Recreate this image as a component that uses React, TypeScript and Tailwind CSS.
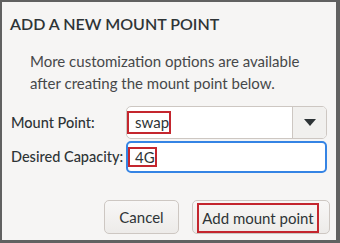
import React from 'react';

const font = { fontFamily: 'Lato, "Noto Sans", sans-serif' };

export default function App() {
  return (
    <div className="w-[340px] h-[243px] bg-[#616161] pt-[2px] pl-[2px] pr-[4px] pb-[3px]" style={font}>
      <div className="h-full bg-[#f6f5f4] flex flex-col">
        <h1 className="mt-[12px] ml-[8px] text-[16px] leading-[20px] font-semibold text-[#2e3436]">
          ADD A NEW MOUNT POINT
        </h1>
        <p className="mt-[16px] ml-[28px] text-[15px] leading-[22px] text-[#46484a]">
          More customization options are available
          <br />
          after creating the mount point below.
        </p>

        <div className="mt-[12px] flex items-center">
          <label className="w-[124px] pl-[9px] text-[14.5px] font-medium text-[#2e3436]">Mount Point:</label>
          <div className="w-[201px] h-[33px] flex rounded-[5px] border border-[#cdc7c2] bg-white overflow-hidden">
            <div className="flex-1 flex items-center">
              <span className="h-[23px] w-[44px] border-2 border-[#c4262e] flex items-center pl-[6px] text-[15px] text-[#2e3436]">
                swap
              </span>
            </div>
            <div className="w-[34px] border-l border-[#cdc7c2] bg-[#f1f0ee] flex items-center justify-center">
              <svg width="12" height="7" viewBox="0 0 12 7">
                <path d="M0 0h12L6 7z" fill="#2e3436" />
              </svg>
            </div>
          </div>
        </div>

        <div className="mt-[2px] flex items-center">
          <label className="w-[124px] pl-[9px] text-[14.5px] font-medium text-[#2e3436]">Desired Capacity:</label>
          <div className="w-[201px] h-[32px] flex items-center rounded-[5px] border-2 border-[#3584e4] bg-white">
            <span className="h-[20px] w-[29px] border-2 border-[#c4262e] flex items-center pl-[5px] text-[15px] text-[#2e3436]">
              4G<span className="w-px h-[15px] bg-[#2e3436] ml-[1px]" />
            </span>
          </div>
        </div>

        <div className="mt-[27px] flex justify-end gap-[13px] pr-[6px]">
          <button className="w-[75px] h-[34px] rounded-[5px] border border-[#cdc7c2] bg-gradient-to-b from-[#f8f7f6] to-[#edebe9] text-[15px] text-[#2e3436]">
            Cancel
          </button>
          <button className="w-[138px] h-[34px] rounded-[5px] border border-[#cdc7c2] bg-gradient-to-b from-[#f8f7f6] to-[#edebe9] flex items-end pl-[4px]">
            <span className="h-[30px] w-[122px] border-2 border-[#c4262e] flex items-center justify-center text-[15px] text-[#2e3436]">
              Add mount point
            </span>
          </button>
        </div>
      </div>
    </div>
  );
}
